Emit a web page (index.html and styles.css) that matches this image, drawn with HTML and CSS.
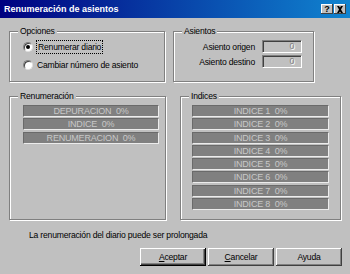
FILE: index.html
```html
<!DOCTYPE html>
<html>
  <head>
    <meta charset="utf-8">
    <title>Renumeración de asientos</title>
    <link rel="stylesheet" href="styles.css">
  </head>
  <body>
    <div class="window">
      <div class="titlebar">
        <span class="title">Renumeración de asientos</span>
        <div class="title-buttons">
          <span class="tbtn">?</span>
          <span class="tbtn close">
            <svg width="8" height="7" viewBox="0 0 8 7"><path d="M1 0h2l1 1.5L5 0h2L5 3.5 7 7H5L4 5.5 3 7H1l2-3.5z" fill="#000"/></svg>
          </span>
        </div>
      </div>

      <div class="row top">
        <fieldset class="group">
          <legend>Opciones</legend>
          <div class="radios">
            <label class="radio"><span class="dot checked"></span><span class="focus">Renumerar diario</span></label>
            <label class="radio"><span class="dot"></span><span>Cambiar número de asiento</span></label>
          </div>
        </fieldset>
        <fieldset class="group">
          <legend>Asientos</legend>
          <div class="fields">
            <label>Asiento origen</label><span class="field">0</span>
            <label>Asiento destino</label><span class="field">0</span>
          </div>
        </fieldset>
      </div>

      <div class="row middle">
        <fieldset class="group">
          <legend>Renumeración</legend>
          <div class="bars renum">
            <div class="bar">DEPURACION  0%</div>
            <div class="bar">INDICE  0%</div>
            <div class="bar">RENUMERACION  0%</div>
          </div>
        </fieldset>
        <fieldset class="group">
          <legend>Indices</legend>
          <div class="bars indices">
            <div class="bar">INDICE 1  0%</div>
            <div class="bar">INDICE 2  0%</div>
            <div class="bar">INDICE 3  0%</div>
            <div class="bar">INDICE 4  0%</div>
            <div class="bar">INDICE 5  0%</div>
            <div class="bar">INDICE 6  0%</div>
            <div class="bar">INDICE 7  0%</div>
            <div class="bar">INDICE 8  0%</div>
          </div>
        </fieldset>
      </div>

      <p class="message">La renumeración del diario puede ser prolongada</p>

      <div class="actions">
        <button class="btn default"><u>A</u>ceptar</button>
        <button class="btn"><u>C</u>ancelar</button>
        <button class="btn">Ayuda</button>
      </div>
    </div>
  </body>
</html>
```

FILE: styles.css
```css
body {
  margin: 0;
  background-color: #c0c0c0;
  font-family: "Liberation Sans", Arial, sans-serif;
  font-size: 8.6px;
  letter-spacing: -0.2px;
  color: #000;
}

.window {
  width: 350px;
  height: 274px;
  background-color: #c0c0c0;
  overflow: hidden;
}

/* title bar */
.titlebar {
  height: 18px;
  display: flex;
  align-items: center;
  justify-content: space-between;
  padding: 0 4px 0 4px;
  background: linear-gradient(to right, #000080, #1084d0);
  color: #fff;
}

.title {
  font-weight: bold;
  font-size: 9px;
  letter-spacing: 0;
  line-height: 18px;
}

.title-buttons {
  display: flex;
  gap: 1px;
}

.tbtn {
  width: 12px;
  height: 10px;
  display: flex;
  align-items: center;
  justify-content: center;
  background-color: #c0c0c0;
  color: #000;
  font-weight: bold;
  font-size: 9px;
  line-height: 1;
  box-shadow: inset -1px -1px #404040, inset 1px 1px #fff;
}

/* rows of group boxes */
.row {
  display: grid;
  padding-left: 9px;
}

.row.top {
  margin-top: 7px;
  grid-template-columns: 156px 141px;
  column-gap: 8px;
  height: 57px;
}

.row.middle {
  margin-top: 8px;
  grid-template-columns: 157px 161px;
  column-gap: 14px;
  height: 130px;
}

.group {
  margin: 0;
  padding: 0;
  min-width: 0;
  border: 1px solid #808080;
  box-shadow: inset 1px 1px #fff, 1px 1px #fff;
}

.group legend {
  margin-left: 8px;
  padding: 0 2px;
  line-height: 12px;
  background-color: #c0c0c0;
}

/* radios */
.radios {
  display: flex;
  flex-direction: column;
  gap: 6px;
  padding: 4px 0 0 13px;
}

.radio {
  display: flex;
  align-items: center;
  gap: 4px;
  height: 12px;
}

.dot {
  width: 10px;
  height: 10px;
  box-sizing: border-box;
  border-radius: 50%;
  background-color: #fff;
  border: 1px solid;
  border-color: #808080 #dfdfdf #dfdfdf #808080;
  box-shadow: inset 1px 1px #404040;
  display: flex;
  align-items: center;
  justify-content: center;
}

.dot.checked::after {
  content: "";
  width: 4px;
  height: 4px;
  border-radius: 50%;
  background-color: #000;
}

.focus {
  outline: 1px dotted #000;
  padding: 0 1px;
  line-height: 12px;
}

/* asientos fields */
.fields {
  display: grid;
  grid-template-columns: auto 40px;
  justify-content: end;
  column-gap: 7px;
  row-gap: 2px;
  padding: 3px 11px 0 0;
  align-items: center;
}

.fields label {
  text-align: right;
}

.field {
  height: 13px;
  box-sizing: border-box;
  border: 1px solid;
  border-color: #808080 #fff #fff #808080;
  box-shadow: inset 1px 1px #404040;
  text-align: right;
  padding-right: 7px;
  line-height: 11px;
  color: #808080;
  text-shadow: 1px 1px #fff;
}

/* progress bars */
.bars {
  display: flex;
  flex-direction: column;
  gap: 1.3px;
  padding-top: 3px;
}

.bars.renum {
  padding-left: 13px;
  width: 136px;
}

.bars.indices {
  padding-left: 11px;
  width: 137px;
}

.bar {
  height: 12px;
  box-sizing: border-box;
  background-color: #808080;
  border: 1px solid;
  border-color: #6a6a6a #ececec #ececec #6a6a6a;
  color: #c8c8c8;
  text-align: center;
  white-space: pre;
  line-height: 10px;
  font-size: 9px;
}

/* footer */
.message {
  margin: 9px 0 0 29px;
  line-height: 12px;
}

.actions {
  display: flex;
  justify-content: flex-end;
  gap: 2px;
  padding-right: 8px;
  margin-top: 7px;
}

.btn {
  width: 66px;
  height: 18px;
  padding: 0;
  background-color: #c0c0c0;
  font: inherit;
  letter-spacing: inherit;
  color: #000;
  border: none;
  box-shadow: inset -1px -1px #404040, inset 1px 1px #fff, inset -2px -2px #808080;
}

.btn.default {
  box-shadow: inset -1px -1px #000, inset 1px 1px #fff, inset -2px -2px #404040, inset -3px -3px #808080;
}
```
